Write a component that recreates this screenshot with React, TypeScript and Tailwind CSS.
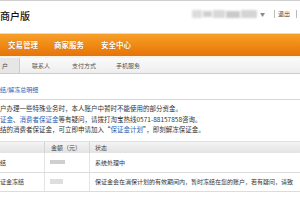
import React from "react";

const F = { fontFamily: '"Noto Sans CJK SC", "Noto Sans", sans-serif' };

export default function App() {
  return (
    <div className="w-[300px] h-[200px] overflow-hidden bg-white text-[#333] relative" style={F}>
      <div className="h-[1px] bg-[#cfcfcf]" />
      {/* header */}
      <div className="h-[32px] flex items-center justify-between">
        <div className="text-[10px] leading-none mt-[-3px] text-[#111] font-medium">商户版</div>
        <div className="flex items-center mt-[-6px] mr-[3px]">
          <div className="flex items-center gap-[1px]">
            <div className="w-[10px] h-[8px] bg-[#dcdcdc] blur-[1px]" />
            <div className="w-[9px] h-[6px] bg-[#cfcfcf] blur-[1px]" />
            <div className="w-[12px] h-[8px] bg-[#d8d8d8] blur-[1px]" />
            <div className="w-[14px] h-[7px] bg-[#c9c9c9] blur-[1px]" />
            <div className="w-[16px] h-[8px] bg-[#d4d4d4] blur-[1px]" />
          </div>
          <span className="text-[5px] text-[#888] ml-[3px]">▼</span>
          <span className="w-px h-[8px] bg-[#bbb] ml-[9px]" />
          <span className="text-[6px] leading-none text-[#444] ml-[3px]">退出</span>
          <span className="w-px h-[8px] bg-[#bbb] ml-[6px]" />
        </div>
      </div>
      {/* orange nav */}
      <div className="h-[23px] border-t border-[#f8d9a0] bg-gradient-to-b from-[#f7a02a] via-[#f08a12] to-[#e6730c] flex items-center">
        <span className="ml-[8px] text-[7.5px] font-bold text-white leading-none [text-shadow:0_0_1px_#b85a00]">交易管理</span>
        <span className="ml-[16px] text-[7.5px] font-bold text-white leading-none [text-shadow:0_0_1px_#b85a00]">商家服务</span>
        <span className="ml-[17px] text-[7.5px] font-bold text-white leading-none [text-shadow:0_0_1px_#b85a00]">安全中心</span>
      </div>
      <div className="h-[2px] bg-[#fbf3e4]" />
      {/* sub tabs */}
      <div className="h-[16px] bg-gradient-to-b from-[#fafafa] to-[#eeeeee] border-b border-[#cccccc] flex items-stretch text-[6px] text-[#555]">
        <div className="w-[20px] bg-[#e6e6e6] border-r border-[#cfcfcf] flex items-center pl-[2px] text-[#444]">户</div>
        <div className="ml-[12px] flex items-center">联系人</div>
        <div className="ml-[22px] flex items-center">支付方式</div>
        <div className="ml-[20px] flex items-center">手机服务</div>
      </div>
      {/* link */}
      <div className="mt-[12px] h-[8px] flex items-center">
        <span className="text-[6px] leading-none text-[#2a64b3] whitespace-nowrap">结/解冻总明细</span>
      </div>
      <div className="mt-[5px] h-px bg-[#d6d6d6]" />
      {/* paragraph */}
      <div className="mt-[3px] text-[6.5px] leading-[10.5px] text-[#333] whitespace-nowrap">
        <div>户办理一些特殊业务时，本人账户中暂时不能使用的部分资金。</div>
        <div>
          <span className="text-[#2a64b3]">证金</span>、<span className="text-[#2a64b3]">消费者保证金</span>等有疑问，请拨打淘宝热线0571-88157858咨询。
        </div>
        <div>
          结的消费者保证金，可立即申请加入“<span className="text-[#2a64b3]">保证金计划</span>”，即刻解冻保证金。
        </div>
      </div>
      {/* table */}
      <div className="mt-[6px] text-[6px] text-[#333] whitespace-nowrap">
        <div className="h-[12px] flex bg-gradient-to-b from-[#f4f4f4] to-[#e3e3e3] border-t border-[#e0e0e0]">
          <div className="w-[45px] border-r border-[#d4d4d4]" />
          <div className="w-[45px] border-r border-[#d4d4d4] flex items-center pl-[6px] text-[#444]">金额（元）</div>
          <div className="flex-1 flex items-center pl-[5px] text-[#444]">状态</div>
        </div>
        <div className="h-[20px] flex border-b border-[#dcdcdc]">
          <div className="w-[45px] border-r border-[#e4e4e4] flex items-center">结</div>
          <div className="w-[45px] border-r border-[#e4e4e4] flex items-center pl-[5px]">
            <div className="w-[15px] h-[4px] bg-[#cfcfcf] blur-[0.6px]" />
          </div>
          <div className="flex-1 flex items-center pl-[5px]">系统处理中</div>
        </div>
        <div className="h-[19px] flex border-b border-[#dcdcdc]">
          <div className="w-[45px] border-r border-[#e4e4e4] flex items-center shrink-0">证金冻结</div>
          <div className="w-[45px] border-r border-[#e4e4e4] flex items-center pl-[5px] shrink-0">
            <div className="w-[13px] h-[5px] bg-[#dedede] blur-[0.6px]" />
          </div>
          <div className="flex-1 flex items-center pl-[5px] overflow-hidden">保证金会在消保计划的有效期间内，暂时冻结在您的账户，若有疑问，请致</div>
        </div>
      </div>
    </div>
  );
}
